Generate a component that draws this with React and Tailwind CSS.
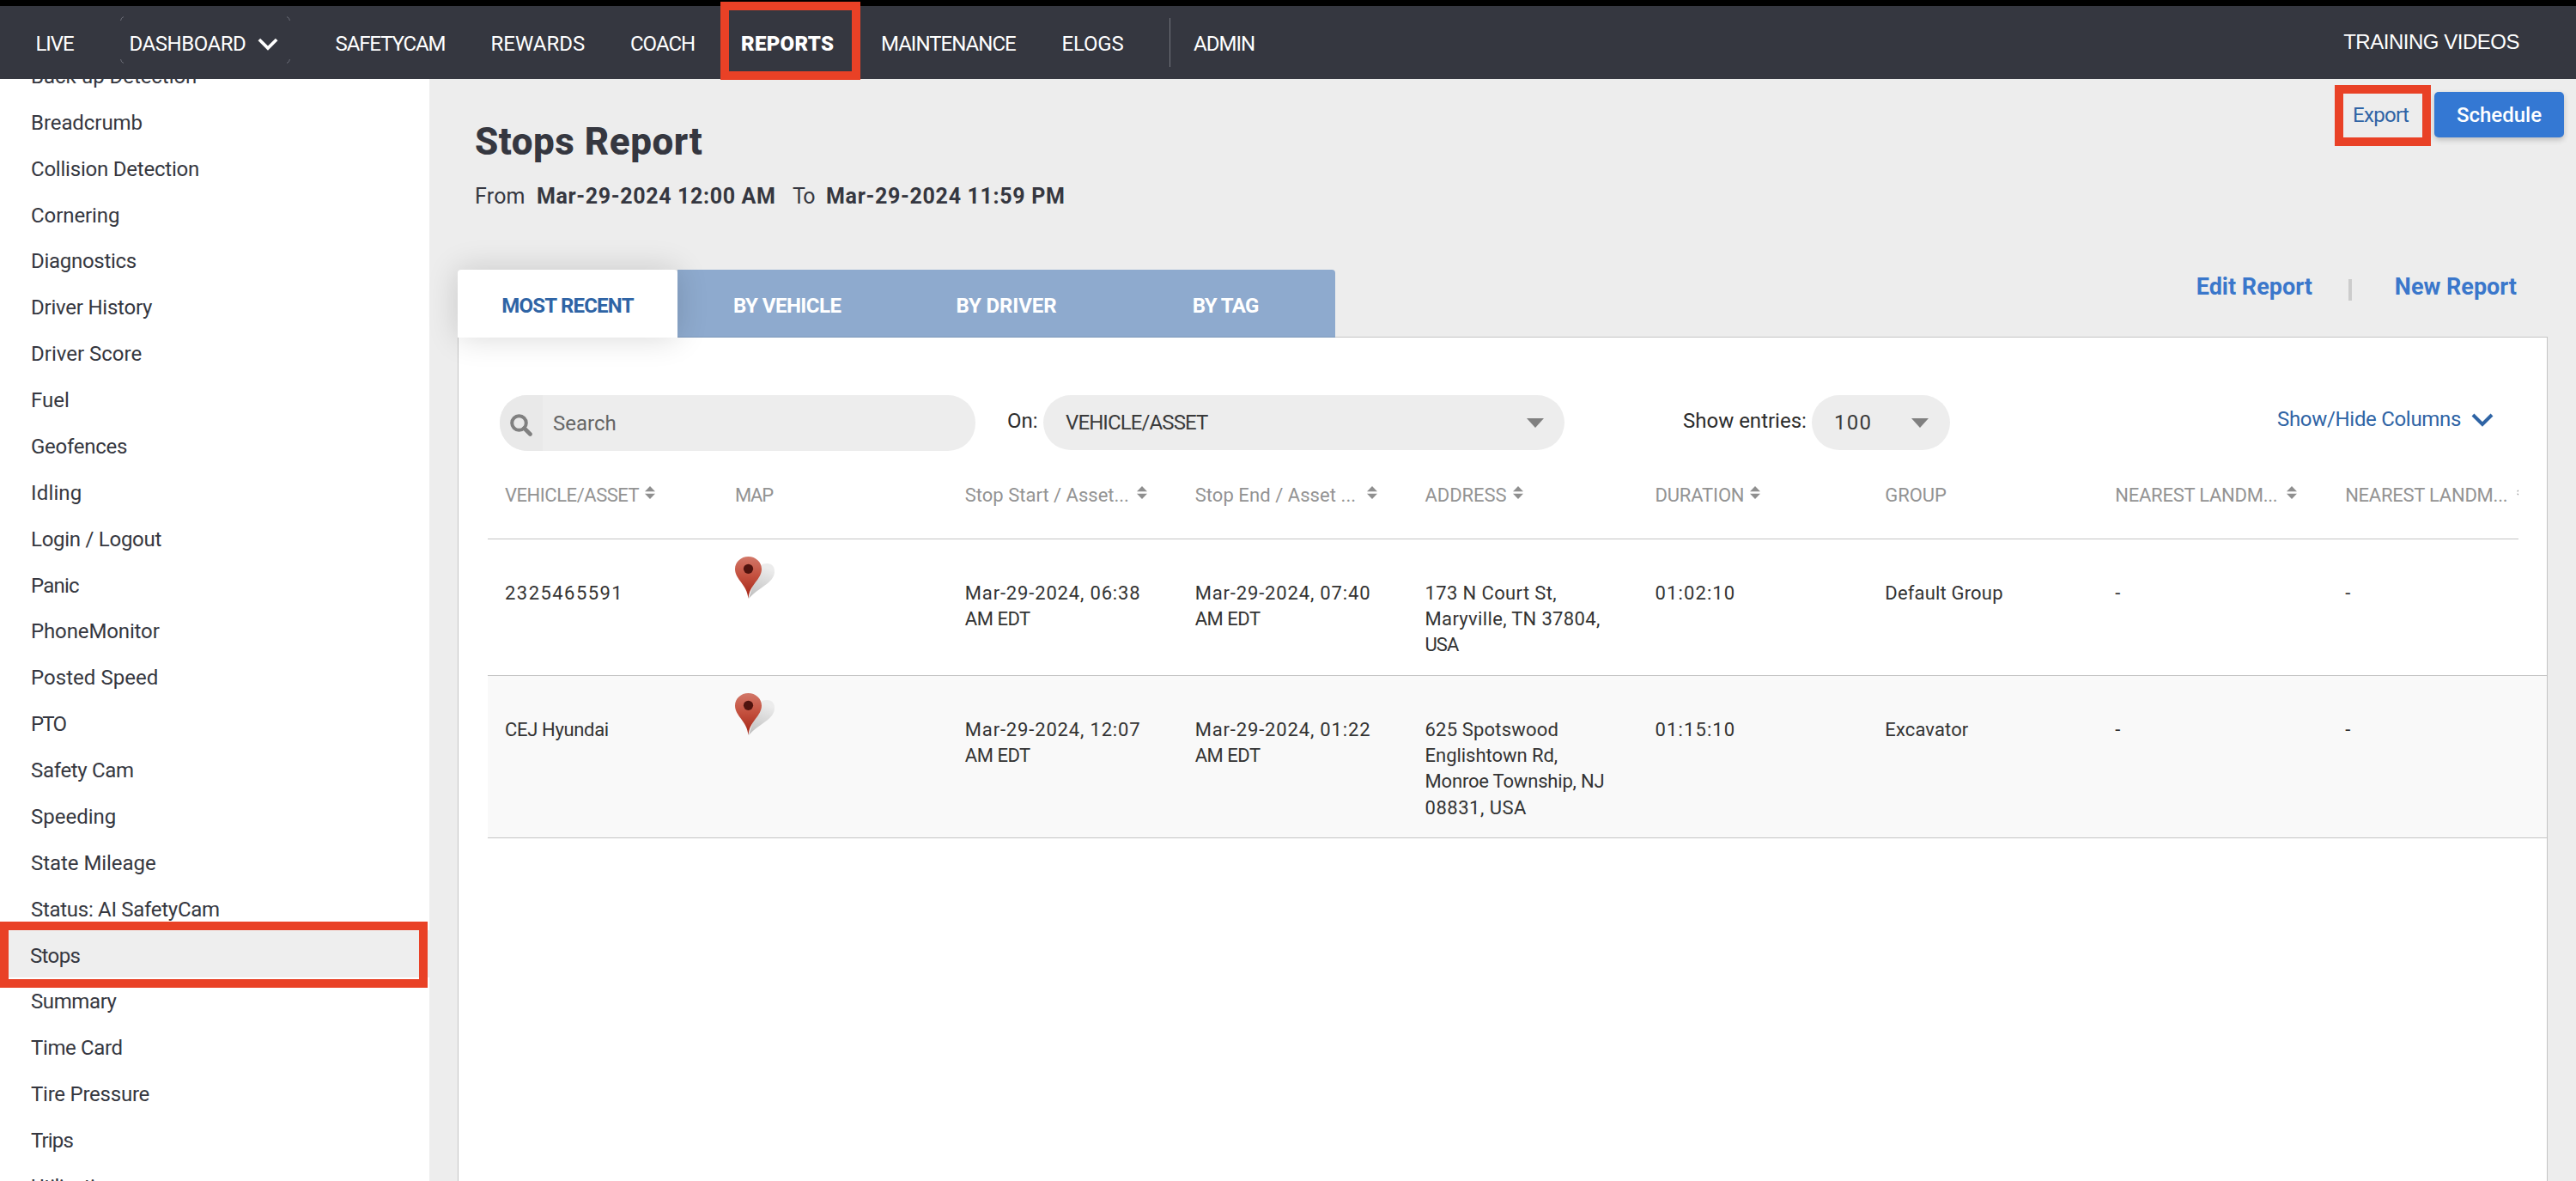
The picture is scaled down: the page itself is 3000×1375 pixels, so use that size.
import React from "react";

const NAV = [
  { label: "LIVE", box: "w-[109px]", text: "tracking-[-1.1px]" },
  { label: "DASHBOARD", box: "w-[240px]", text: "tracking-[-0.46px]", menu: true },
  { label: "SAFETYCAM", box: "w-[181px]", text: "tracking-[-1.1px]" },
  { label: "REWARDS", box: "w-[162.5px]", text: "" },
  { label: "COACH", box: "w-[129px]", text: "tracking-[-1px]" },
  { label: "REPORTS", box: "w-[163px]", text: "tracking-[0.3px] font-black" },
  { label: "MAINTENANCE", box: "w-[210.5px]", text: "tracking-[-0.98px]" },
  { label: "ELOGS", box: "w-[125.5px]", text: "tracking-[-0.17px]" },
];

const REPORTS = [
  ["Back-up Detection", "tracking-[-0.06px]"],
  ["Breadcrumb", "tracking-[-0.07px]"],
  ["Collision Detection", "tracking-[-0.22px]"],
  ["Cornering", "tracking-[-0.08px]"],
  ["Diagnostics", "tracking-[-0.29px]"],
  ["Driver History", "tracking-[-0.23px]"],
  ["Driver Score", ""],
  ["Fuel", ""],
  ["Geofences", "tracking-[-0.26px]"],
  ["Idling", "tracking-[0.16px]"],
  ["Login / Logout", "tracking-[-0.27px]"],
  ["Panic", "tracking-[-0.79px]"],
  ["PhoneMonitor", "tracking-[-0.13px]"],
  ["Posted Speed", "tracking-[0.04px]"],
  ["PTO", "tracking-[-1.82px]"],
  ["Safety Cam", "tracking-[-0.33px]"],
  ["Speeding", ""],
  ["State Mileage", "tracking-[-0.05px]"],
  ["Status: AI SafetyCam", "tracking-[-0.29px]"],
  ["Stops", "tracking-[-0.63px]"],
  ["Summary", "tracking-[-0.4px]"],
  ["Time Card", "tracking-[-0.37px]"],
  ["Tire Pressure", "tracking-[-0.24px]"],
  ["Trips", "tracking-[-0.85px]"],
  ["Utilization", "tracking-[-0.6px]"],
];

const TABS = [
  { label: "BY VEHICLE", text: "tracking-[-0.53px]" },
  { label: "BY DRIVER", text: "tracking-[-0.11px]" },
  { label: "BY TAG", text: "tracking-[-0.61px]" },
];

const COLUMNS = [
  { label: "VEHICLE/ASSET", text: "tracking-[-0.46px]", sort: "near" },
  { label: "MAP", text: "tracking-[-1.18px]" },
  { label: "Stop Start / Asset...", text: "", sort: "far" },
  { label: "Stop End / Asset ...", text: "tracking-[0.06px]", sort: "far" },
  { label: "ADDRESS", text: "tracking-[-0.06px]", sort: "near" },
  { label: "DURATION", text: "tracking-[-0.15px]", sort: "near" },
  { label: "GROUP", text: "tracking-[-0.09px]" },
  { label: "NEAREST LANDM...", text: "tracking-[-0.24px]", sort: "far" },
  { label: "NEAREST LANDM...", text: "tracking-[-0.24px]", sort: "far" },
];

const DATE = "tracking-[0.84px]";
const ZONE = ["AM EDT", "tracking-[-0.47px]"];

const ROWS = [
  {
    box: "h-[159px] pt-[48px] bg-white",
    cells: [
      [["2325465591", "tracking-[1.45px]"]],
      "pin",
      [["Mar-29-2024, 06:38", DATE], ZONE],
      [["Mar-29-2024, 07:40", DATE], ZONE],
      [
        ["173 N Court St,", "tracking-[0.37px]"],
        ["Maryville, TN 37804,", "tracking-[0.33px]"],
        ["USA", "tracking-[-1px]"],
      ],
      [["01:02:10", "tracking-[1.13px]"]],
      [["Default Group", "tracking-[0.17px]"]],
      [["-", ""]],
      [["-", ""]],
    ],
  },
  {
    box: "h-[189px] pt-[48px] bg-[#f9f9f9]",
    cells: [
      [["CEJ Hyundai", "tracking-[-0.34px]"]],
      "pin",
      [["Mar-29-2024, 12:07", DATE], ZONE],
      [["Mar-29-2024, 01:22", DATE], ZONE],
      [
        ["625 Spotswood", "tracking-[0.18px]"],
        ["Englishtown Rd,", "tracking-[-0.04px]"],
        ["Monroe Township, NJ", "tracking-[-0.19px]"],
        ["08831, USA", "tracking-[0.5px]"],
      ],
      [["01:15:10", "tracking-[1.13px]"]],
      [["Excavator", "tracking-[0.12px]"]],
      [["-", ""]],
      [["-", ""]],
    ],
  },
];

const GRID = "grid grid-cols-[repeat(9,267.9px)]";

function Chevron({ className }) {
  return (
    <svg viewBox="0 0 26 16" className={className} fill="none" stroke="currentColor" strokeWidth="4">
      <path d="M2 2 L13 13 L24 2" />
    </svg>
  );
}

function SortIcon() {
  return (
    <svg viewBox="0 0 12 15" className="mb-[5px] h-[15px] w-[12px] shrink-0" fill="#8f8f8f">
      <path d="M6 0 L12 6.3 H0 Z M0 8.7 H12 L6 15 Z" />
    </svg>
  );
}

function Caret() {
  return (
    <svg viewBox="0 0 20 11" className="h-[11px] w-[20px]" fill="#808080">
      <path d="M0 0 H20 L10 11 Z" />
    </svg>
  );
}

function Pin() {
  return (
    <svg viewBox="0 0 48 50" className="mt-[-28px] h-[50px] w-[48px]">
      <defs>
        <linearGradient id="pinFill" x1="0" y1="0" x2="0" y2="1">
          <stop offset="0" stopColor="#d27768" />
          <stop offset="0.45" stopColor="#c4513f" />
          <stop offset="1" stopColor="#a32314" />
        </linearGradient>
        <linearGradient id="pinShade" x1="0" y1="1" x2="0.3" y2="0">
          <stop offset="0" stopColor="#bdbdbd" />
          <stop offset="1" stopColor="#ececec" />
        </linearGradient>
      </defs>
      <path d="M16 49 C19 38 23 29 24 20 C25 11 32 8 37 8 C43 8 46.500 12 46 18.500 C45 31 27 36 16 49 Z" fill="url(#pinShade)" />
      <path d="M15.500 49 C14 32 0 27 0 14.500 C0 6.300 7 0 15.500 0 C24 0 31 6.300 31 14.500 C31 27 17 32 15.500 49 Z" fill="url(#pinFill)" />
      <circle cx="15.500" cy="14.300" r="5.600" fill="#4f130e" />
    </svg>
  );
}

function Select({ label, className, labelClass }) {
  return (
    <div className={"flex h-[64px] items-center justify-between rounded-[32px] bg-[#ededed] text-[#3a3a3a] " + className}>
      <span className={labelClass}>{label}</span>
      <Caret />
    </div>
  );
}

function TopBar() {
  return (
    <header className="flex h-[92px] shrink-0 justify-between border-t-[7px] border-black bg-[#353740] text-[24px] text-white">
      <nav className="flex items-center pl-[41.500px] pt-[3px]">
        {NAV.map((n) => (
          <div key={n.label} className={"relative flex items-center whitespace-nowrap " + n.box}>
            <span className={n.text}>{n.label}</span>
            {n.menu && <Chevron className="ml-[14px] h-[15px] w-[24px]" />}
            {n.menu && (
              <svg viewBox="0 0 198 55" className="absolute left-[-11px] top-[-14px] h-[55px] w-[198px]" fill="none" stroke="#6a6c75">
                <path d="M0.500 5 Q1 1.500 4 0.500 M194 0.500 Q197 1.500 197.500 5 M0.500 50 Q1 53.500 4 54.500 M194 54.500 Q197 53.500 197.500 50" />
              </svg>
            )}
          </div>
        ))}
        <div className="mb-[3px] h-[57px] w-px bg-[#73757d]" />
        <span className="ml-[27px] tracking-[-0.97px]">ADMIN</span>
      </nav>
      <span className="self-center pr-[66px] pb-px font-['Liberation_Sans',sans-serif] tracking-[-0.48px]">TRAINING VIDEOS</span>
    </header>
  );
}

function Sidebar() {
  return (
    <aside className="h-full w-[500px] shrink-0 overflow-hidden bg-white text-[24px] text-[#353740]">
      <ul className="mt-[-30px]">
        {REPORTS.map(([name, tracking]) => (
          <li
            key={name}
            className={
              "flex items-center " +
              (name === "Stops"
                ? "mt-[-2.600px] mb-[1.500px] h-[55px] bg-[#eeeeee] pt-[4px] pl-[35px] "
                : "h-[53.880px] pl-[36px] ") +
              tracking
            }
          >
            {name}
          </li>
        ))}
      </ul>
    </aside>
  );
}

function ReportHeader() {
  return (
    <section className="flex h-[222px] justify-between pl-[53px]">
      <div className="pt-[43px] text-[#353740]">
        <h1 className="h-[60px] text-[44px] leading-[60px] font-extrabold tracking-[0.500px]">Stops Report</h1>
        <p className="mt-[13.500px] flex h-[40px] text-[25px] leading-[40px] whitespace-nowrap">
          <span className="w-[72px] tracking-[0.200px]">From</span>
          <b className="w-[298px] tracking-[0.640px]">Mar-29-2024 12:00 AM</b>
          <span className="w-[39px] tracking-[-1.500px]">To</span>
          <b className="tracking-[0.680px]">Mar-29-2024 11:59 PM</b>
        </p>
      </div>
      <div className="mt-[15px] flex h-[53px] items-center pr-[14px] text-[24px]">
        <a className="w-[95px] tracking-[-0.690px] text-[#2f64a5]">Export</a>
        <button className="h-[53px] w-[151px] rounded-[5px] bg-[#3478d3] font-medium text-white shadow-[0_3px_6px_rgba(0,0,0,0.2)]">Schedule</button>
      </div>
    </section>
  );
}

function TabStrip() {
  return (
    <div className="relative z-10 flex h-[79px] justify-between pl-[33px]">
      <div className="flex w-[1022px] text-[24px] font-bold">
        <div className="relative z-10 flex w-[256px] items-center justify-center rounded-t-[4px] bg-white tracking-[-0.780px] text-[#2f64a5] shadow-[0_0_36px_rgba(0,0,0,0.16)]">
          <span className="pt-[5px]">MOST RECENT</span>
        </div>
        <div className="flex flex-1 rounded-tr-[4px] border-b border-[#7b97ba] bg-[#8eaace] text-white">
          {TABS.map((t) => (
            <div key={t.label} className={"flex flex-1 items-center justify-center pt-[5px] " + t.text}>
              {t.label}
            </div>
          ))}
        </div>
      </div>
      <div className="flex h-[41px] items-center pr-[69px] text-[27px] font-bold text-[#3a77cb]">
        <span>Edit Report</span>
        <span className="mt-[5px] mr-[50px] ml-[42px] h-[25px] w-[4px] bg-[#cccccc]" />
        <span>New Report</span>
      </div>
    </div>
  );
}

function Controls() {
  return (
    <div className="ml-[48px] flex h-[65px] text-[24px] whitespace-nowrap text-[#2b2b2b]">
      <div className="flex w-[554px] items-center overflow-hidden rounded-[32px] bg-[#ededed] text-[#666666]">
        <div className="flex h-full w-[50px] items-center bg-[#e9e9e9] pl-[12px]">
          <svg viewBox="0 0 26 26" className="mt-[4px] h-[26px] w-[26px]" fill="none" stroke="#808080" strokeWidth="4">
            <circle cx="10.500" cy="10.500" r="8.300" />
            <path d="M16.500 16.500 L23.500 23.500" strokeWidth="4.600" strokeLinecap="round" />
          </svg>
        </div>
        <span className="pl-[12px]">Search</span>
      </div>
      <span className="ml-[37px] h-[60px] w-[42px] leading-[60px]">On:</span>
      <Select label="VEHICLE/ASSET" className="w-[607px] pr-[24px] pl-[26px]" labelClass="tracking-[-0.890px]" />
      <span className="ml-[138px] h-[60px] w-[150px] leading-[60px]">Show entries:</span>
      <Select label="100" className="w-[161px] pr-[25px] pl-[26px]" labelClass="tracking-[1.200px]" />
      <div className="ml-[381px] flex h-[55px] items-center text-[#2f64a5]">
        <span className="w-[226px] tracking-[-0.310px]">Show/Hide Columns</span>
        <Chevron className="mt-[2px] h-[16px] w-[26px]" />
      </div>
    </div>
  );
}

function Table() {
  return (
    <div className="ml-[34px] text-[22px] whitespace-nowrap">
      <div className={"h-[103px] w-[2365px] overflow-hidden border-b border-[#c4c4c4] text-[#939393] " + GRID}>
        {COLUMNS.map((c, i) => (
          <div key={i} className="flex items-center pl-[20px]">
            <span className={c.text + (c.sort === "far" ? " w-[200px] shrink-0" : " mr-[7px]")}>{c.label}</span>
            {c.sort && <SortIcon />}
          </div>
        ))}
      </div>
      {ROWS.map((r, i) => (
        <div key={i} className={"border-b border-[#c4c4c4] leading-[30.200px] text-[#333333] " + r.box + " " + GRID}>
          {r.cells.map((cell, j) => (
            <div key={j} className="pl-[20px]">
              {cell === "pin" ? (
                <Pin />
              ) : (
                cell.map(([line, tracking]) => (
                  <div key={line} className={tracking}>
                    {line}
                  </div>
                ))
              )}
            </div>
          ))}
        </div>
      ))}
    </div>
  );
}

export default function App() {
  return (
    <div className="relative flex h-[1375px] w-[3000px] flex-col overflow-hidden bg-[#ededed] font-[Roboto,sans-serif]">
      <TopBar />
      <div className="flex min-h-0 flex-1">
        <Sidebar />
        <main className="flex min-w-0 flex-1 flex-col">
          <ReportHeader />
          <TabStrip />
          <section className="mt-[-1px] ml-[33px] w-[2434px] flex-1 overflow-hidden border border-b-0 border-[#c4c4c4] bg-white pt-[67px]">
            <Controls />
            <Table />
          </section>
        </main>
      </div>
      <div className="absolute top-[2px] left-[839px] h-[91px] w-[163px] border-[10px] border-[#e94126]" />
      <div className="absolute top-[99px] left-[2719px] h-[71px] w-[112px] border-[10px] border-[#e94126]" />
      <div className="absolute top-[1073px] left-0 h-[77px] w-[498px] border-[10px] border-[#e94126]" />
    </div>
  );
}
